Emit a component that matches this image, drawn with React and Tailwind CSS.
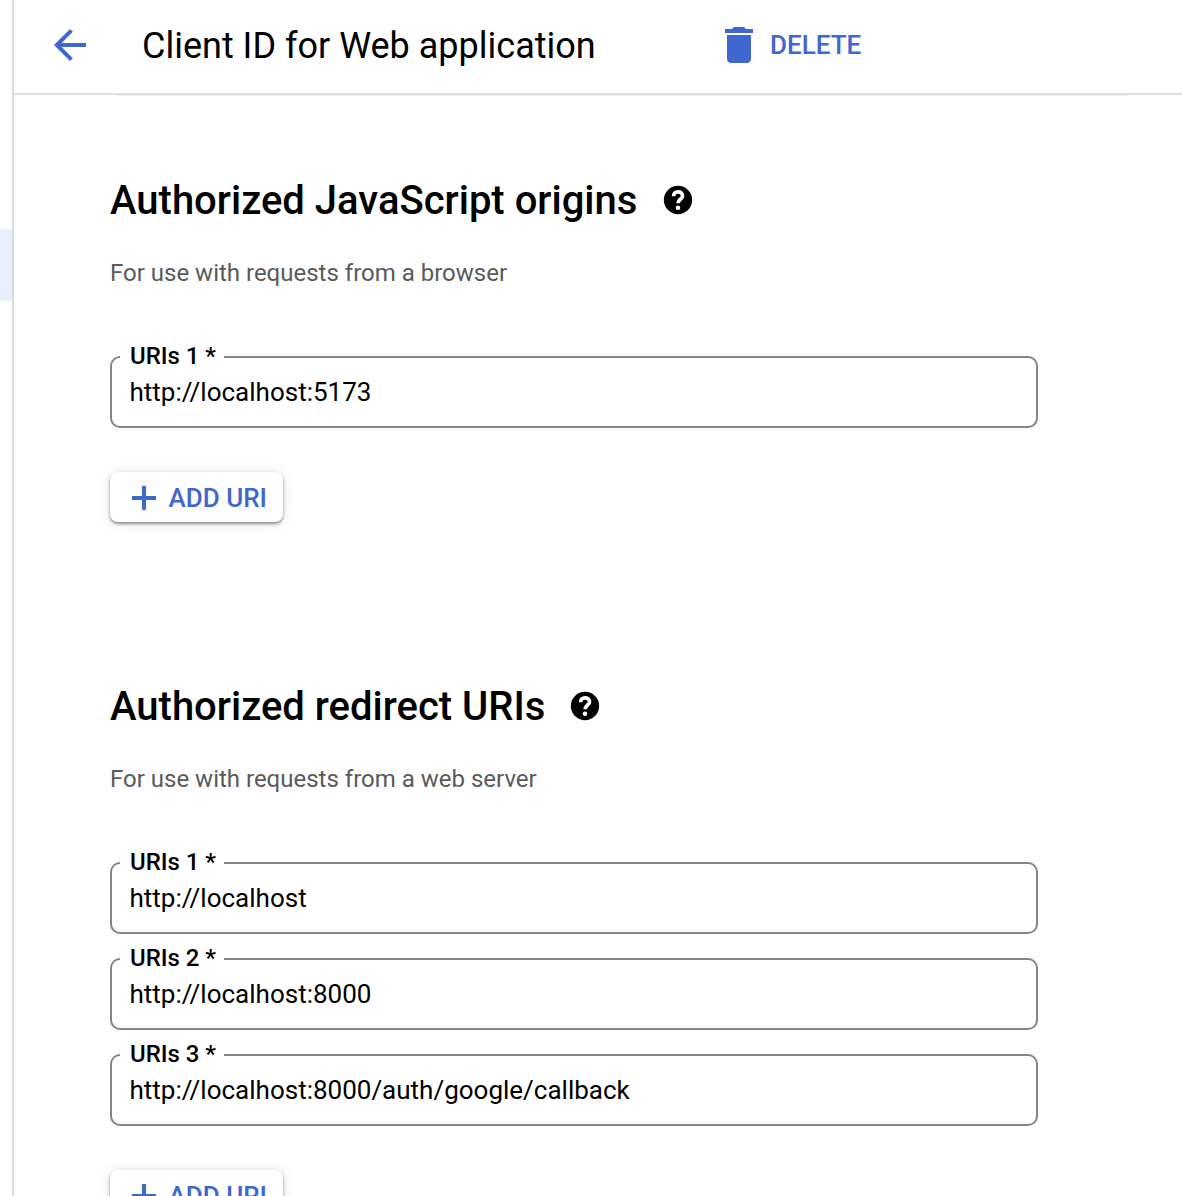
function Help() {
  return (
    <svg className="mb-0.5 size-[34px] shrink-0" viewBox="0 0 24 24">
      <circle cx="12" cy="12" r="10" fill="#000" />
      <path d="M8.9 9.3c0-2 1.3-3 3.1-3s3.2 1 3.2 2.8c0 2.3-3.2 2.5-3.2 5.2" fill="none" stroke="#fff" strokeWidth="2.6" />
      <circle cx="12" cy="17.4" r="1.6" fill="#fff" />
    </svg>
  );
}

function Field({ label, value }) {
  return (
    <fieldset className="h-[79px] w-[928px] rounded-[10px] border-2 border-[#80868b] pl-2">
      <legend className="h-4 w-[104px] pl-[10px] text-[24px] leading-[14px] font-medium tracking-[-0.05px] whitespace-nowrap">{label}</legend>
      <div className="pl-[9.5px] text-[26px] leading-[54px]">{value}</div>
    </fieldset>
  );
}

function AddButton() {
  return (
    <button className="flex h-[50px] w-[173px] items-center rounded-[8px] bg-white pt-0.5 pl-[22px] text-[26px] font-medium text-[#4066d0] shadow-[0_2px_3px_rgba(0,0,0,0.4),0_1px_12px_rgba(0,0,0,0.13)]">
      <svg className="mr-[12.5px] size-6" viewBox="0 0 24 24" fill="currentColor">
        <path d="M10 0h4v10h10v4H14v10h-4V14H0v-4h10z" />
      </svg>
      <span className="whitespace-nowrap">ADD URI</span>
    </button>
  );
}

function Section({ title, titleGap, hint, fields }) {
  return (
    <section>
      <h2 className={`flex h-12 items-center text-[40px] font-medium whitespace-nowrap ${titleGap}`}>
        {title}
        <Help />
      </h2>
      <p className="mt-[33px] text-[24px] leading-[30px] text-[#5a5a5a]">{hint}</p>
      <div className="mt-[61px] flex flex-col gap-[17px]">
        {fields.map(([label, value]) => <Field key={label} label={label} value={value} />)}
      </div>
      <div className="mt-11"><AddButton /></div>
    </section>
  );
}

export default function App() {
  return (
    <div className="flex h-[1196px] w-[1182px] overflow-hidden bg-white font-['Roboto',sans-serif] text-black">
      <aside className="w-[14px] shrink-0 border-r-2 border-[#dadce0] pt-[229px]">
        <div className="h-[72px] bg-[#e8f0fe]" />
      </aside>
      <main className="w-[1168px]">
        <header className="flex h-[95px] items-center border-b-2 border-[#e0e0e0] pb-1 pl-10">
          <svg className="size-8" viewBox="4 4 16 16" fill="#4066d0">
            <path d="M20 11H7.83l5.59-5.59L12 4l-8 8 8 8 1.41-1.41L7.83 13H20v-2z" />
          </svg>
          <h1 className="ml-14 w-[583px] pt-0.5 text-[36px] whitespace-nowrap">Client ID for Web application</h1>
          <svg className="h-9 w-7" viewBox="5 3 14 18" fill="#4066d0">
            <path d="M6 19c0 1.1.9 2 2 2h8c1.1 0 2-.9 2-2V6H6v13zM19 4h-3.5l-1-1h-5l-1 1H5v2h14V4z" />
            <path d="M5 6h14v1H5z" fill="#fff" />
          </svg>
          <span className="ml-[17px] pt-0.5 text-[26px] font-medium text-[#4066d0]">DELETE</span>
        </header>
        <div className="ml-[101px] h-px w-[1013px] bg-[#f3f3f3]" />
        <div className="flex flex-col gap-[161px] pt-[81px] pl-24">
          <Section title="Authorized JavaScript origins" titleGap="gap-[23.6px]" hint="For use with requests from a browser" fields={[["URIs 1 *", "http://localhost:5173"]]} />
          <Section title="Authorized redirect URIs" titleGap="gap-[23px]" hint="For use with requests from a web server" fields={[["URIs 1 *", "http://localhost"], ["URIs 2 *", "http://localhost:8000"], ["URIs 3 *", "http://localhost:8000/auth/google/callback"]]} />
        </div>
      </main>
    </div>
  );
}
